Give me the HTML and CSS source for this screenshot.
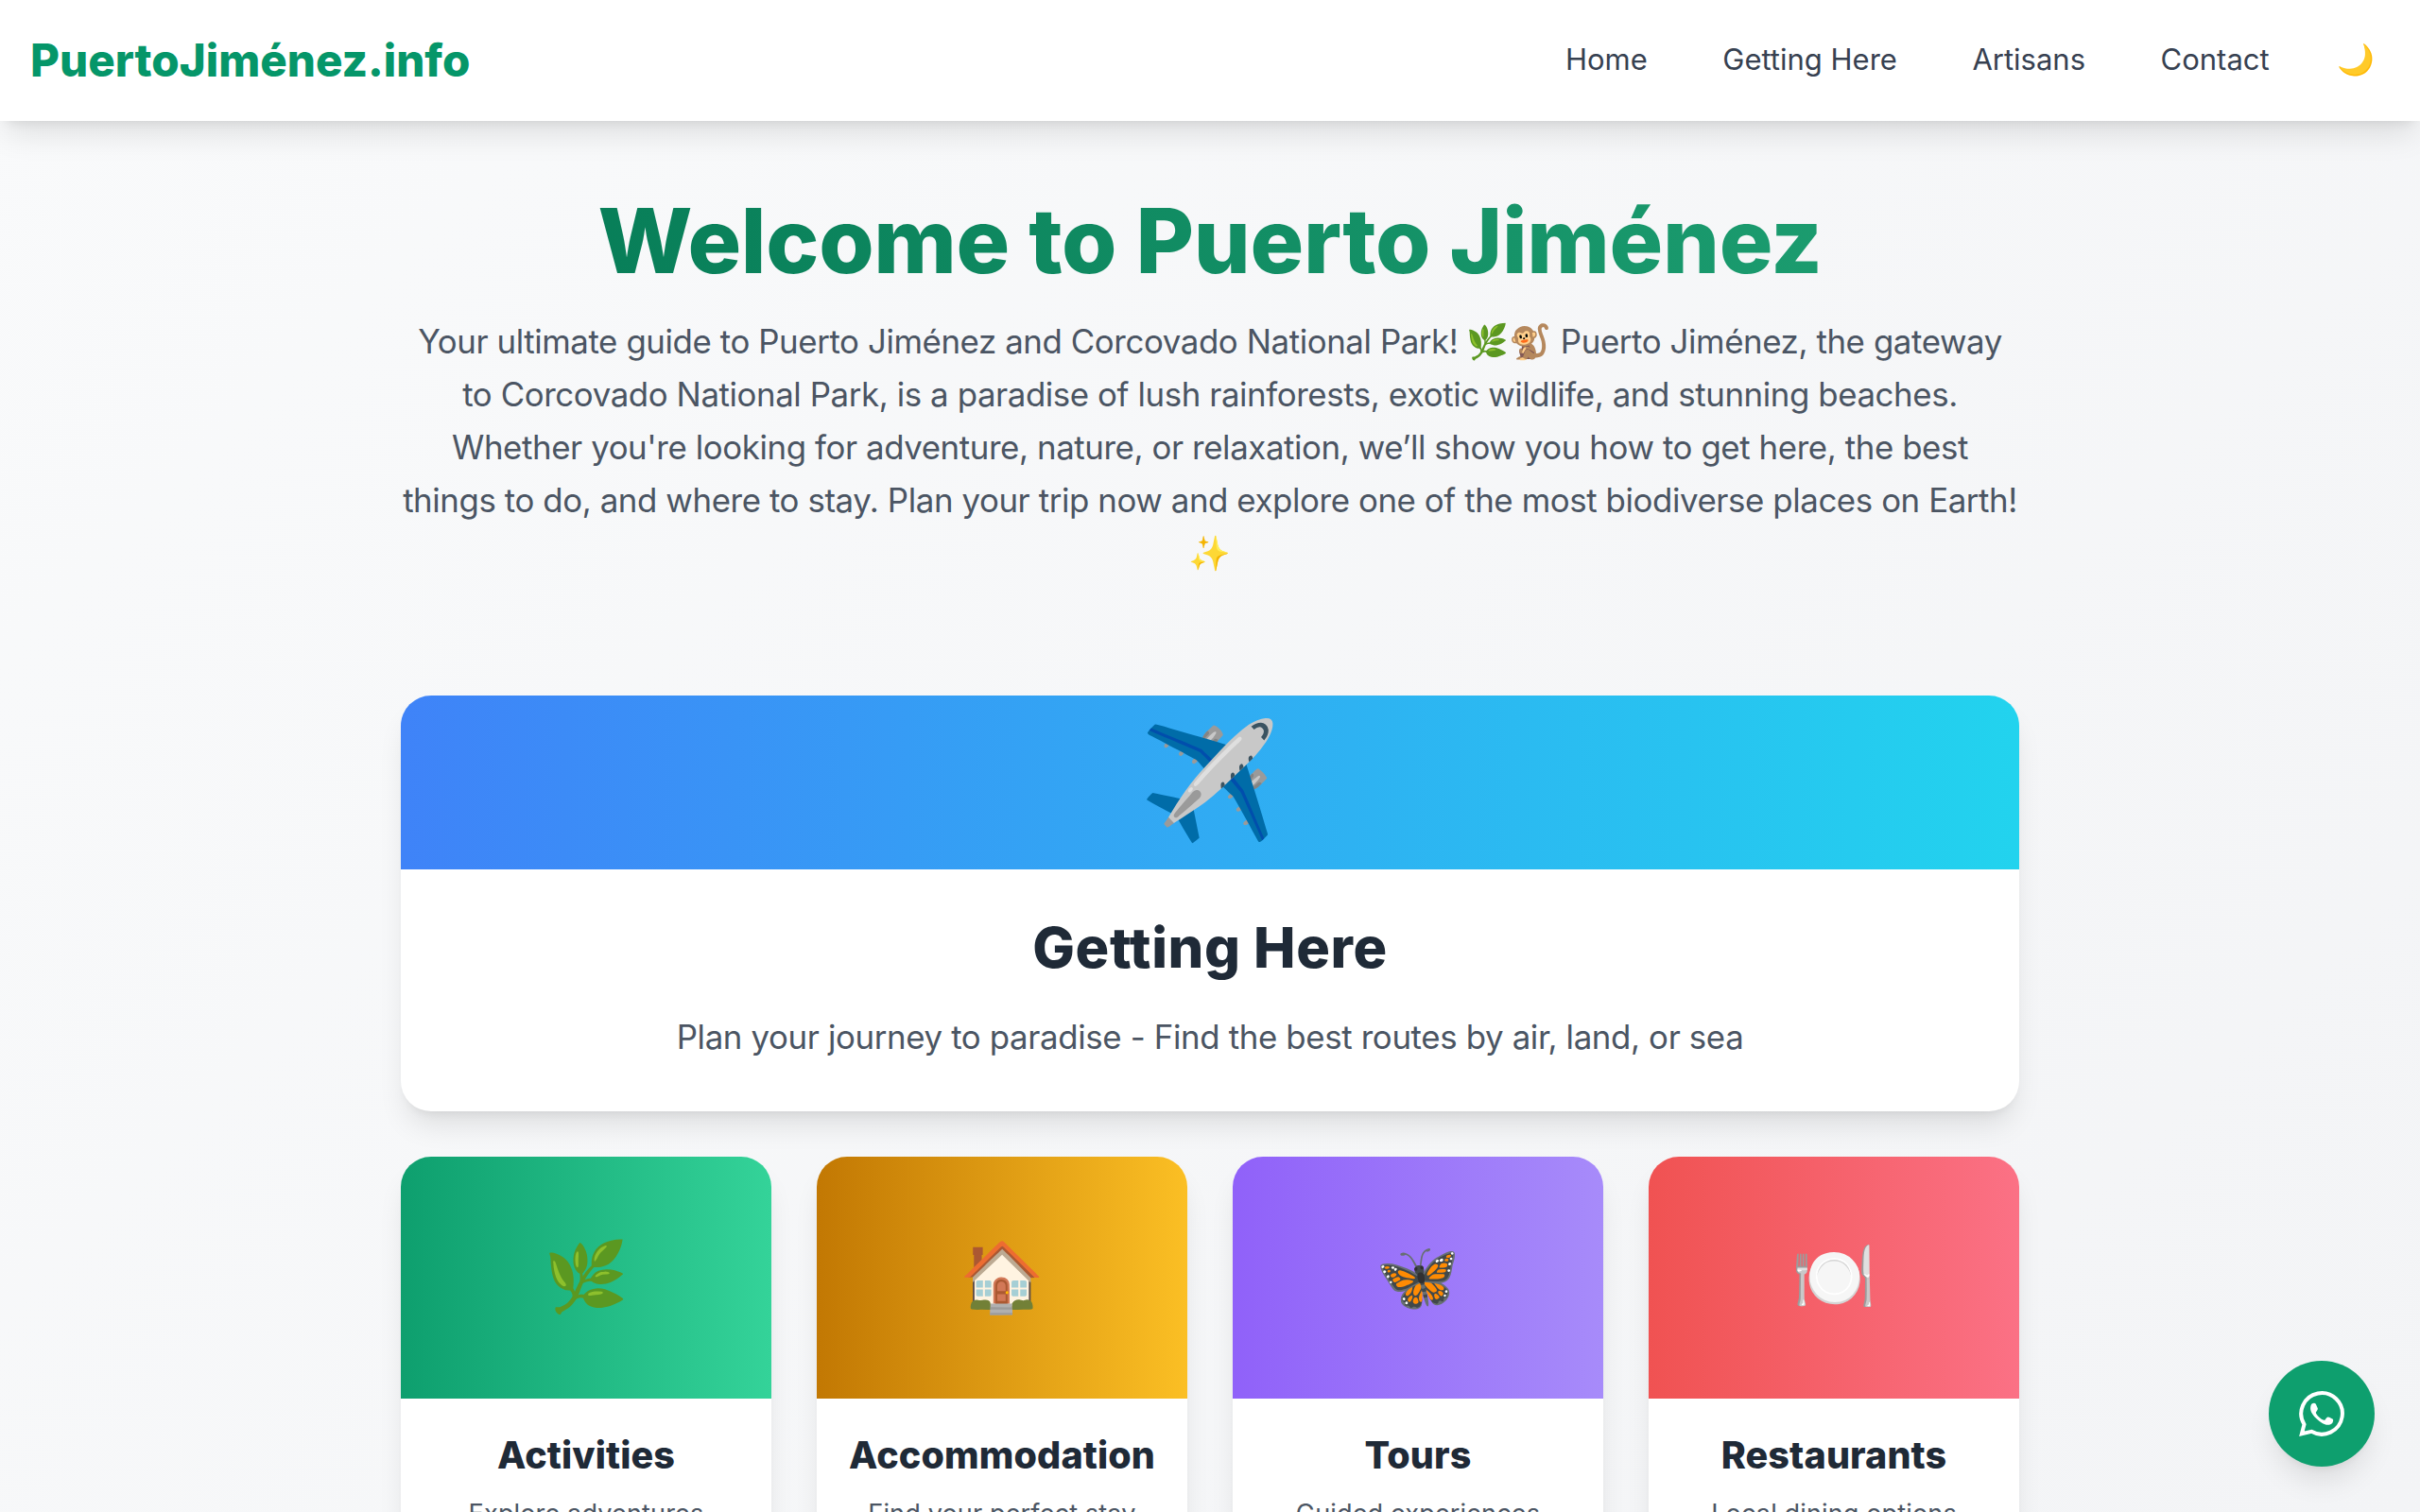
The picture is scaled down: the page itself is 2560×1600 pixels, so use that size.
FILE: index.html
```
<!DOCTYPE html>
<html lang="en">
<head>
<meta charset="utf-8">
<title>PuertoJiménez.info</title>
<link rel="stylesheet" href="styles.css">
</head>
<body>
<header class="nav">
  <a class="brand">PuertoJiménez.info</a>
  <nav class="links"><a>Home</a><a>Getting Here</a><a>Artisans</a><a>Contact</a><span class="theme">🌙</span></nav>
</header>
<main class="main">
  <section class="hero">
    <h1>Welcome to Puerto Jiménez</h1>
    <p>Your ultimate guide to Puerto Jiménez and Corcovado National Park! <span class="emoji">🌿🐒</span> Puerto Jiménez, the gateway<br>to Corcovado National Park, is a paradise of lush rainforests, exotic wildlife, and stunning beaches.<br>Whether you're looking for adventure, nature, or relaxation, we’ll show you how to get here, the best<br>things to do, and where to stay. Plan your trip now and explore one of the most biodiverse places on Earth!<br><span class="emoji">✨</span></p>
  </section>
  <a class="card wide">
    <div class="banner blue">✈️</div>
    <div class="body"><h2>Getting Here</h2><p>Plan your journey to paradise - Find the best routes by air, land, or sea</p></div>
  </a>
  <section class="grid">
    <a class="card"><div class="banner green">🌿</div><div class="body"><h3>Activities</h3><p>Explore adventures</p></div></a>
    <a class="card"><div class="banner amber">🏠</div><div class="body"><h3>Accommodation</h3><p>Find your perfect stay</p></div></a>
    <a class="card"><div class="banner violet">🦋</div><div class="body"><h3>Tours</h3><p>Guided experiences</p></div></a>
    <a class="card"><div class="banner red">🍽️</div><div class="body"><h3>Restaurants</h3><p>Local dining options</p></div></a>
  </section>
</main>
<a class="chat" aria-label="WhatsApp">
  <svg viewBox="0 0 48 48" width="48" height="48">
    <path d="M2.9 45.2 5.5 35.3A21.8 21.8 0 1 1 13.2 42.8Z" fill="none" stroke="#fff" stroke-width="4"/>
    <path fill="#fff" d="M13.6 13.4c1.500-.8 3.400-.9 4.200.3l2 4.600c.3 1-.2 2-1.600 3.700-.5.600-.5 1.100 0 1.900 2 3.200 4.700 5.500 7.900 6.800.8.3 1.200.2 1.700-.4 1.300-1.700 1.900-2.800 3-2.700 1.200.2 4.300 1.700 5 2.200.6.500.4 2.300-.3 3.600-.9 1.500-3.300 2.400-5.300 2.300C23.900 35.400 12.200 25.300 12.100 18.400c0-2.100.6-4.200 1.500-5Z"/>
  </svg>
</a>
</body>
</html>
```
FILE: styles.css
```
*{box-sizing:border-box;margin:0;padding:0}
body{font-family:Inter,"Noto Color Emoji",sans-serif;height:1600px;overflow:hidden;background:linear-gradient(135deg,#f9fafb,#f3f4f6);color:#1f2a37}
.nav{height:128px;background:#fff;display:flex;justify-content:space-between;align-items:center;padding:0 48px 2px 32px;box-shadow:0 20px 30px -6px #0000001a,0 8px 12px -8px #0000001a}
.brand{font-size:47.5px;font-weight:800;color:#059669}
.links{display:flex;align-items:center;font-size:31px;gap:79.5px;padding-bottom:2px;color:#374151}
.theme{font-size:32px;margin-left:-8px}
.main{width:1712px;margin:0 auto}
.hero{text-align:center;padding-top:63px}
h1,h2,h3{font-weight:800}
h1{font-size:94.5px;line-height:128px;letter-spacing:-.0037em;color:transparent;background:linear-gradient(90deg,#057a55,#1ea072);background-clip:text;-webkit-background-clip:text}
p{color:#4b5563}
.hero p{font-size:34.85px;line-height:56px;letter-spacing:-.0117em;margin-top:14px;white-space:nowrap}
.emoji{font-size:36px;line-height:1;letter-spacing:0}
.card{display:block;background:#fff;border-radius:32px;overflow:hidden;text-align:center;box-shadow:0 20px 30px -6px #0000001a,0 8px 12px -8px #0000001a}
.banner{height:256px;padding-bottom:4px;display:flex;align-items:center;justify-content:center;font-size:72px}
.blue{background:linear-gradient(90deg,#3f83f8,#22d3ee)}
.green{background:linear-gradient(90deg,#0e9f6e,#34d399)}
.amber{background:linear-gradient(90deg,#c27803,#fbbf24)}
.violet{background:linear-gradient(90deg,#9061f9,#a78bfa)}
.red{background:linear-gradient(90deg,#f05252,#fb7185)}
.wide{margin-top:123px;height:440px}
.wide .banner{height:184px;padding-bottom:7px;font-size:120px}
.wide .body{padding-top:46px}
.wide p{font-size:34.85px;line-height:56px;letter-spacing:-.0104em;margin-top:31px}
h2{font-size:59.5px;line-height:72px;letter-spacing:.0096em}
.grid{display:grid;grid-template-columns:repeat(4,1fr);gap:48px;margin-top:48px}
.grid .body{padding:32px 0}
h3{font-size:39.5px;line-height:56px;letter-spacing:.003em}
.grid p{font-size:27.1px;line-height:40px;letter-spacing:.004em;margin-top:14px}
.chat{position:fixed;right:48px;bottom:48px;width:112px;height:112px;border-radius:50%;background:#0e9f6e;display:flex;align-items:center;justify-content:center;box-shadow:0 20px 30px -6px #0000001a,0 8px 12px -8px #0000001a}
```
